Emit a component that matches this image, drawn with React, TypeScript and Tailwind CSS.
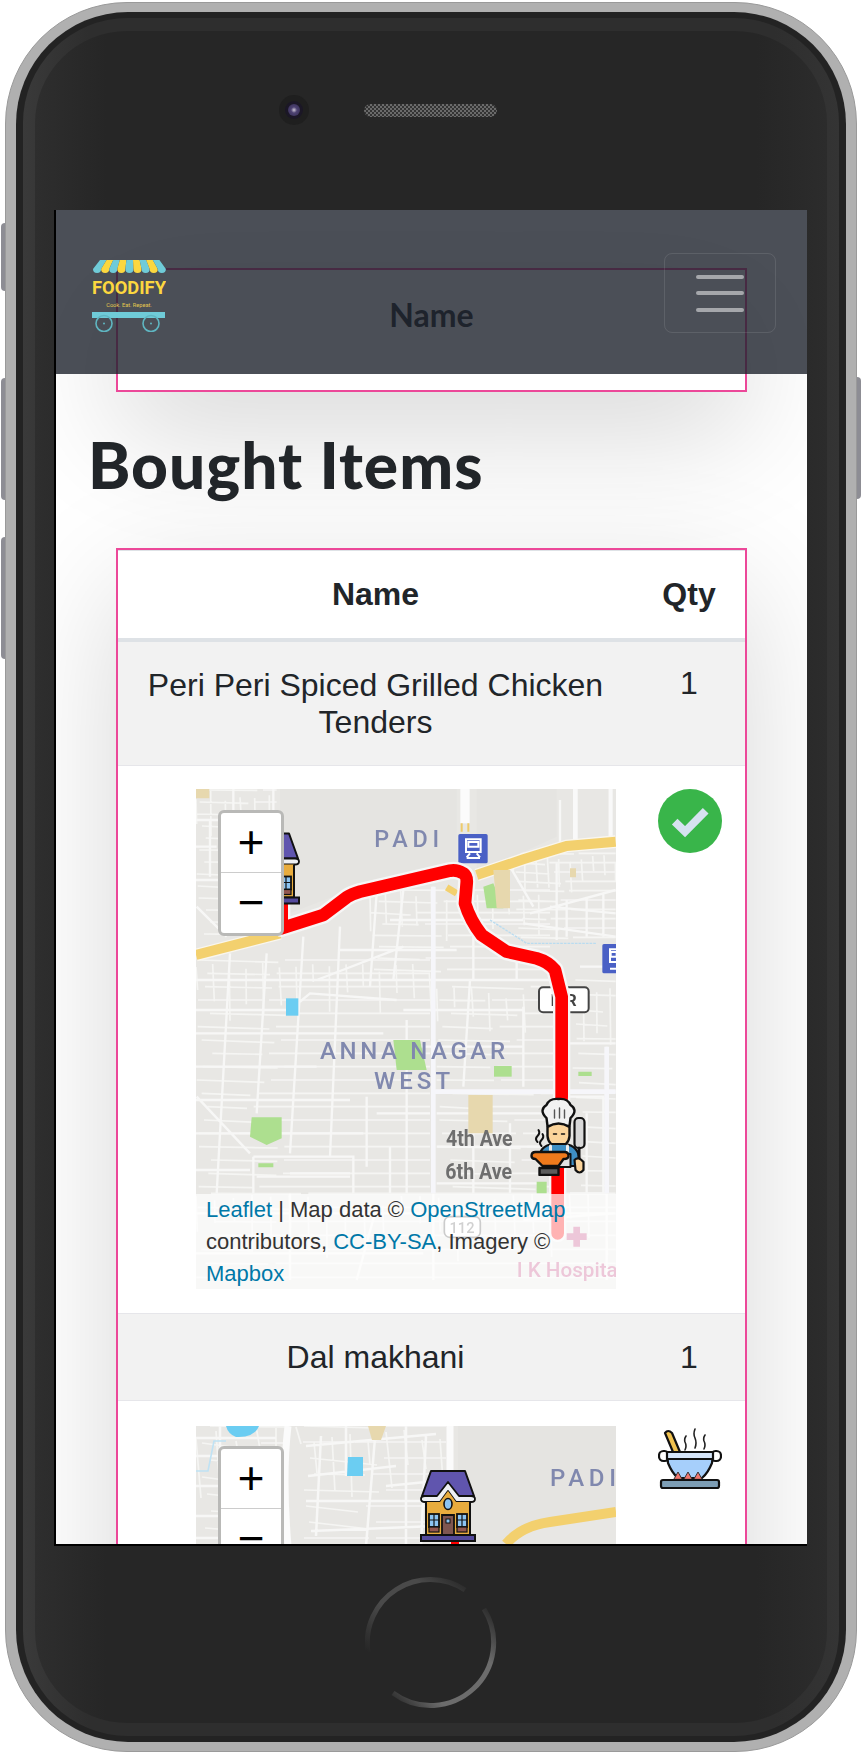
const LINK = 'text-[#0078a8]';

// minor streets of the first map, in zoom-crop coordinates
const streets1 = [
  'M18 120H250', 'M18 200H80', 'M18 300H270', 'M18 600H1080', 'M18 690H300L360 640L620 660',
  'M18 760H580', 'M18 860H380', 'M18 960H480', 'M18 1060H520', 'M190 1130H490V1240', 'M190 1130V1240',
  'M250 27V90', 'M130 27V100', 'M60 120V290', 'M20 380L110 470', 'M120 520L80 1240', 'M230 520L200 1000',
  'M340 470L300 1120', 'M450 440L420 1130', 'M560 340L540 620', 'M640 330L610 600',
  'M730 320V1500', 'M850 470V600', 'M980 500V600', 'M650 720V1240', 'M840 600L820 920', 'M1000 680V920',
  'M600 420H1000', 'M450 510H800', 'M380 600L640 500', 'M640 690H1000', 'M640 800H1000', 'M560 1000H720',
  'M730 935H1277', 'M1140 790H1277', 'M1250 800V1500', 'M1140 950H1240V1240', 'M1160 27V200', 'M1260 27V180',
  'M1110 60V190', 'M1020 400L1277 330', 'M1100 250V480', 'M1000 430L1277 470', 'M1080 380L1277 400',
  'M1130 360V470', 'M1190 350V470', 'M1240 340V470', 'M1170 560H1277', 'M960 260L1030 380',
  'M740 1000H1060', 'M740 1100H1060', 'M740 1210H1060', 'M850 1000V1240', 'M960 1030V1240',
  'M300 1180H480', 'M200 1190H480', 'M600 1100V1240', 'M530 950V1160', 'M18 1170H180', 'M20 950L180 1120',
  'M1190 1000V1240', 'M1140 1240H1250', 'M18 1300H1277', 'M18 1420H700', 'M300 1240V1500', 'M560 1280L500 1500',
  'M820 27V120', 'M1000 1320L1277 1300',
];

// fills a district with a rough mesh of small lanes
function lanes(x0: number, y0: number, x1: number, y1: number, dx: number, dy: number, seed: number) {
  let s = seed;
  const rnd = () => {
    s = (s * 9301 + 49297) % 233280;
    return s / 233280;
  };
  let d = '';
  for (let y = y0; y < y1; y += dy) {
    const a = x0 + rnd() * dx;
    const b = Math.min(x1, a + dx * (2 + rnd() * 3));
    d += `M${a.toFixed(0)} ${y.toFixed(0)}L${b.toFixed(0)} ${(y + rnd() * 8).toFixed(0)}`;
    if (b < x1 - dx) d += `M${(b + dx * 0.4).toFixed(0)} ${y.toFixed(0)}H${x1}`;
  }
  for (let x = x0; x < x1; x += dx) {
    const a = y0 + rnd() * dy;
    const b = Math.min(y1, a + dy * (1 + rnd() * 3));
    d += `M${x.toFixed(0)} ${a.toFixed(0)}L${(x + rnd() * 6).toFixed(0)} ${b.toFixed(0)}`;
  }
  return d;
}

const lanes1 = [
  lanes(18, 30, 260, 480, 44, 36, 7),
  lanes(18, 540, 720, 1240, 50, 40, 23),
  lanes(540, 330, 1080, 600, 46, 34, 41),
  lanes(970, 220, 1277, 480, 34, 28, 11),
  lanes(740, 620, 1090, 1240, 52, 40, 67),
  lanes(1140, 600, 1277, 1240, 40, 44, 5),
  lanes(18, 1240, 1277, 1527, 56, 42, 90),
].join('');

// same idea for the part of the second map that is on screen
const streets2 = [
  'M0 12H80', 'M0 30H60', 'M0 60H40', 'M0 90H60', 'M0 112H50', 'M24 0V120',
  'M110 20L240 8', 'M112 50L200 40', 'M110 75H230', 'M115 105L240 100',
  'M125 10L120 110', 'M150 0V50', 'M180 0L170 120', 'M210 0V120', 'M230 10L225 120', 'M190 60L240 55',
];
const lanes2 = lanes(100, 0, 250, 125, 18, 16, 31) + lanes(0, 0, 90, 125, 20, 17, 12);

const ROUTE =
  'M275 360V445L400 405L470 352Q485 342 510 335L780 272Q800 268 820 280Q832 288 830 310L825 370Q840 420 875 465L950 515L1040 535Q1075 545 1095 570L1115 650V950L1103 1170V1360';

function House({ className }: { className: string }) {
  return (
    <svg viewBox="0 0 56 72" className={className}>
      <path d="M6 30H50V65H6Z" fill="#e8ac3e" stroke="#111" strokeWidth="2" />
      <path d="M11 1H45L54 26H2Z" fill="#6055ae" stroke="#111" strokeWidth="2" strokeLinejoin="round" />
      <path d="M1 29Q1 26 5 26H17L28 12L39 26H51Q55 26 55 29Q55 32 51 32H36L28 21L20 32H5Q1 32 1 29Z" fill="#eef0f4" stroke="#111" strokeWidth="1.8" strokeLinejoin="round" />
      <path d="M20 32L28 21L36 32H50V45H6V32Z" fill="#e8ac3e" />
      <path d="M6 32V65M50 32V65" stroke="#111" strokeWidth="2" />
      <ellipse cx="28" cy="34" rx="4" ry="5.5" fill="#8cc4f2" stroke="#111" strokeWidth="1.6" />
      <path d="M22 45H34V65H22Z" fill="#7f5650" stroke="#111" strokeWidth="1.8" />
      <rect x="26" y="49" width="4" height="4" fill="#8cc4f2" stroke="#111" strokeWidth="1" />
      <rect x="9" y="44" width="10" height="13" fill="#8cc4f2" stroke="#111" strokeWidth="1.8" />
      <rect x="37" y="44" width="10" height="13" fill="#8cc4f2" stroke="#111" strokeWidth="1.8" />
      <path d="M14 44V57M9 50H19M42 44V57M37 50H47" stroke="#111" strokeWidth="1.2" />
      <rect x="9" y="57" width="10" height="5" fill="#93574f" stroke="#111" strokeWidth="1.2" />
      <rect x="37" y="57" width="10" height="5" fill="#93574f" stroke="#111" strokeWidth="1.2" />
      <rect x="1" y="65" width="54" height="6" fill="#544a9c" stroke="#111" strokeWidth="2" />
    </svg>
  );
}

function Chef({ className }: { className: string }) {
  return (
    <svg viewBox="0 0 56 80" className={className} strokeLinejoin="round" strokeLinecap="round">
      <path d="M16 22Q8 14 16 9Q19 2 28 3Q37 2 40 9Q48 14 40 22L39 30H17Z" fill="#f2f2f2" stroke="#111" strokeWidth="2.4" />
      <path d="M24 14V22M29 12V22M34 14V22" stroke="#555" strokeWidth="1.4" />
      <path d="M17 31Q28 24 39 31V40Q38 50 28 50Q18 50 17 40Z" fill="#fbd49b" stroke="#111" strokeWidth="2.4" />
      <path d="M23 38H26M31 38H34" stroke="#111" strokeWidth="1.5" />
      <path d="M9 62Q9 50 22 48H35Q48 50 49 64V70H14Z" fill="#3f8fc4" stroke="#111" strokeWidth="2.2" />
      <path d="M20 50V58M37 50V58" stroke="#eee" strokeWidth="3" />
      <path d="M18 58H40V71H18Z" fill="#e2e2e2" stroke="#111" strokeWidth="2" />
      <path d="M1 60Q1 56 5 56H34Q38 56 38 60Q38 63 33 63L28 70H12L5 63Q1 63 1 60Z" fill="#ef7a1c" stroke="#111" strokeWidth="2.4" />
      <path d="M9 72H28V79H9Z" fill="#5c5c5c" stroke="#111" strokeWidth="2.4" />
      <rect x="44" y="22" width="10" height="30" rx="4" fill="#d8d8d8" stroke="#111" strokeWidth="2.2" />
      <path d="M48.5 52V66" stroke="#111" strokeWidth="3" />
      <path d="M44 64Q48 60 53 66V74Q49 79 45 74Z" fill="#fbd49b" stroke="#111" strokeWidth="2.2" />
      <path d="M7 46Q4 43 7 40Q10 37 8 34M11 50Q8 47 11 44Q14 41 12 38" fill="none" stroke="#111" strokeWidth="2" />
    </svg>
  );
}

function Pot({ className }: { className: string }) {
  return (
    <svg viewBox="0 0 64 62" className={className} strokeLinecap="round" strokeLinejoin="round">
      <path d="M7 5Q10 1 14 5L22 24H15Z" fill="#f0c24f" stroke="#111" strokeWidth="2.2" />
      <path d="M28 8Q26 11 27 14Q29 18 27 22M37 1Q35 6 37 10Q39 15 37 20M47 7Q45 10 46 13Q48 17 46 21" fill="none" stroke="#222" strokeWidth="1.6" />
      <rect x="1" y="23" width="10" height="10" rx="4.5" fill="#fff" stroke="#111" strokeWidth="2.2" />
      <rect x="53" y="23" width="10" height="10" rx="4.5" fill="#fff" stroke="#111" strokeWidth="2.2" />
      <path d="M9 24H55L54 35Q50 45 44 50H20Q14 45 10 35Z" fill="#a6cffb" stroke="#111" strokeWidth="2.2" />
      <path d="M9 24H55V31H9Z" fill="#d6e6fa" stroke="#111" strokeWidth="2.2" />
      <path d="M26 31H30M33 31H34M37 31H50" stroke="#111" strokeWidth="1.4" />
      <path d="M16 51L20 44L24 51ZM26 51L30 44L34 51ZM36 51L40 44L44 51Z" fill="#f0756e" stroke="#333" strokeWidth="1" />
      <rect x="3" y="52" width="58" height="8" rx="2" fill="#7d9eb5" stroke="#111" strokeWidth="2.2" />
    </svg>
  );
}

function Logo() {
  const stripes = [0, 1, 2, 3, 4, 5, 6, 7, 8];
  return (
    <svg viewBox="0 0 74 72" className="w-[74px] h-[72px]">
      {stripes.map((i) => {
        const tl = 8 + i * 6.6;
        const bl = 1 + i * 8.1;
        return (
          <path
            key={i}
            d={`M${tl} 0H${tl + 6.6}L${bl + 8.1} 9A4.05 4.05 0 0 1 ${bl} 9Z`}
            fill={i % 2 ? '#fcd73f' : '#6fcbd8'}
          />
        );
      })}
      <text x="37" y="33.5" textAnchor="middle" fontFamily="Roboto, sans-serif" fontWeight="700" fontSize="19" fill="#fcd73f" textLength="74" lengthAdjust="spacingAndGlyphs">FOODIFY</text>
      <text x="37" y="46.5" textAnchor="middle" fontFamily="Roboto, sans-serif" fontSize="5.6" fill="#e5c94e">Cook. Eat. Repeat.</text>
      <rect x="0" y="52" width="73" height="6" fill="#6fcbd8" />
      <circle cx="12" cy="63.5" r="8" fill="none" stroke="#5fb6c2" strokeWidth="1.6" />
      <circle cx="59" cy="63.5" r="8" fill="none" stroke="#5fb6c2" strokeWidth="1.6" />
      <circle cx="12" cy="63.5" r="1" fill="#5fb6c2" />
      <circle cx="59" cy="63.5" r="1" fill="#5fb6c2" />
    </svg>
  );
}

function ZoomControl({ top }: { top: string }) {
  return (
    <div className={`absolute left-[22px] ${top} border-[3px] border-[#b9b9b7] rounded-[6px] w-[66px] bg-white font-['Liberation_Mono',monospace] text-black`}>
      <div className="h-[60px] flex items-center justify-center text-[46px] border-b border-[#ccc] pt-[8px]">+</div>
      <div className="h-[60px] flex items-center justify-center text-[46px] pt-[6px]">−</div>
    </div>
  );
}

function Map1() {
  return (
    <div className="relative w-[420px] h-[500px] overflow-hidden">
      <svg viewBox="18 27 1260 1500" className="w-full h-full block blur-[0.4px]">
        <rect x="18" y="27" width="1260" height="1500" fill="#e8e7e4" />
        <path d={lanes1} fill="none" stroke="#f5f5f3" strokeWidth="5" />
        <path d={streets1.join('')} fill="none" stroke="#f7f7f6" strokeWidth="7" />
        <path d="M270 27H800V250L480 330L300 400H270Z" fill="#e5e4e1" />
        <path d="M860 27H1100V170L880 270H860Z" fill="#e5e4e1" />
        <path d="M730 320V1240M1250 800V1240M730 935H1277" fill="none" stroke="#f6f6fa" strokeWidth="14" />
        <path d="M825 27V130" fill="none" stroke="#fbfbfb" strokeWidth="28" />
        <path d="M815 130V155M835 130V155" stroke="#eecb6a" strokeWidth="6" />
        <path d="M1155 27V180M1262 27V170" fill="none" stroke="#f9f9f9" strokeWidth="12" />
        <path d="M18 525L270 460" fill="none" stroke="#f9f6ee" strokeWidth="38" />
        <path d="M860 285L1000 238L1130 198L1277 185" fill="none" stroke="#f9f6ee" strokeWidth="38" />
        <path d="M18 525L270 460" fill="none" stroke="#f3d06e" strokeWidth="30" />
        <path d="M860 285L1000 238L1130 198L1277 185" fill="none" stroke="#f3d06e" strokeWidth="30" />
        <path d="M770 322L800 340" fill="none" stroke="#f3d06e" strokeWidth="20" />
        <path d="M288 655H325V707H288Z" fill="#6bcdf2" />
        <path d="M610 780H690L710 870H620Z" fill="#addf8f" />
        <path d="M912 858H965V890H912Z" fill="#addf8f" />
        <path d="M185 1012H275V1075L230 1095L180 1070Z" fill="#addf8f" />
        <path d="M880 320L910 310L940 385H890Z" fill="#addf8f" />
        <path d="M1165 875H1205V888H1165ZM205 1150H250V1162H205ZM1040 1205H1070V1240H1040Z" fill="#addf8f" />
        <path d="M910 270H960V385H920Z" fill="#e7d8ae" />
        <path d="M835 945H908V1060H835Z" fill="#e7d8ae" />
        <path d="M18 27H58V55H18ZM1140 265H1158V292H1140Z" fill="#e7d8ae" />
        <path d="M900 420L1010 490H1220" fill="none" stroke="#b9dcf0" strokeWidth="4" strokeDasharray="8 3" />
        <g fontFamily="Roboto, 'Noto Sans', sans-serif" fontWeight="500" fill="#8088ae">
          <text x="553" y="200" fontSize="70" textLength="194">PADI</text>
          <text x="390" y="838" fontSize="72" textLength="555">ANNA NAGAR</text>
          <text x="552" y="928" fontSize="72" textLength="228">WEST</text>
        </g>
        <g fontFamily="Roboto, 'Noto Sans', sans-serif" fontWeight="700" fill="#6e6e6e">
          <text x="768" y="1098" fontSize="64" textLength="200" lengthAdjust="spacingAndGlyphs">4th Ave</text>
          <text x="766" y="1196" fontSize="64" textLength="200" lengthAdjust="spacingAndGlyphs">6th Ave</text>
        </g>
        <rect x="805" y="162" width="88" height="88" rx="5" fill="#4a60c5" />
        <path d="M828 178H872V216H828ZM835 186H865V200H835ZM830 232L840 220M870 232L860 220M830 234H870" fill="none" stroke="#fff" strokeWidth="6" />
        <rect x="1237" y="492" width="88" height="88" rx="5" fill="#4a60c5" />
        <path d="M1260 508H1290V546H1260ZM1262 516H1280V530H1262ZM1260 566H1290" fill="none" stroke="#fff" strokeWidth="6" />
        <rect x="1047" y="622" width="149" height="75" rx="12" fill="#fff" stroke="#444" strokeWidth="6" />
        <text x="1121" y="678" textAnchor="middle" fontFamily="Roboto, sans-serif" fontWeight="700" fontSize="50" fill="#444">IRR</text>
        <path d={ROUTE} fill="none" stroke="#f6f6f6" strokeWidth="52" strokeLinejoin="round" strokeLinecap="round" />
        <path d={ROUTE} fill="none" stroke="#f00" strokeWidth="38" strokeLinejoin="round" strokeLinecap="round" />
        <rect x="763" y="1310" width="108" height="62" rx="16" fill="#fff" stroke="#555" strokeWidth="5" />
        <text x="816" y="1358" textAnchor="middle" fontFamily="Roboto, sans-serif" fontWeight="500" fontSize="44" fill="#666">112</text>
        <path d="M1150 1340H1170V1360H1190V1380H1170V1400H1150V1380H1130V1360H1150Z" fill="#c2457f" />
        <text x="980" y="1490" fontFamily="Roboto, sans-serif" fontWeight="500" fontSize="62" fill="#c2457f">I K Hospital</text>
      </svg>
      <House className="absolute left-[48px] top-[43px] w-[56px] h-[73px]" />
      <Chef className="absolute left-[334px] top-[307px] w-[57px] h-[80px]" />
      <ZoomControl top="top-[21px]" />
      <div className="absolute left-0 right-0 bottom-0 h-[95px] bg-white/70 px-[10px] text-left text-[22px] leading-[32px] text-[#333] font-['Liberation_Sans',sans-serif]">
        <span className={LINK}>Leaflet</span> | Map data © <span className={LINK}>OpenStreetMap</span> contributors, <span className={LINK}>CC-BY-SA</span>, Imagery © <span className={LINK}>Mapbox</span>
      </div>
    </div>
  );
}

function Map2() {
  return (
    <div className="relative w-[420px] h-[500px] overflow-hidden">
      <svg viewBox="0 0 420 500" className="w-full h-full block blur-[0.4px]">
        <rect width="420" height="500" fill="#e8e7e4" />
        <path d={lanes2} fill="none" stroke="#f5f5f3" strokeWidth="1.7" />
        <path d={streets2.join('')} fill="none" stroke="#f7f7f6" strokeWidth="2.5" />
        <path d="M262 0H420V85L340 95L300 125H262Z" fill="#e5e4e1" />
        <path d="M92 0Q86 50 92 120M254 0V60" fill="none" stroke="#fbfbfb" strokeWidth="7" />
        <path d="M30 0H63Q58 12 40 11Q32 8 30 0Z" fill="#6bcdf2" />
        <path d="M0 45H12L18 15H30" fill="none" stroke="#bfe2f4" strokeWidth="1.6" />
        <path d="M152 31H167V50H151Z" fill="#6bcdf2" />
        <path d="M172 0H190L185 14H176Z" fill="#e7d8ae" />
        <path d="M310 118Q325 100 354 96L420 86" fill="none" stroke="#f3d06e" strokeWidth="10" />
        <text x="354" y="60" fontFamily="Roboto, sans-serif" fontWeight="500" fontSize="24" textLength="66" fill="#8088ae">PADI</text>
      </svg>
      <div className="absolute left-[255px] top-[114px] w-[8px] h-[16px] bg-[#f00]" />
      <House className="absolute left-[224px] top-[44px] w-[56px] h-[72px]" />
      <ZoomControl top="top-[20px]" />
    </div>
  );
}

function HomeRing() {
  return (
    <svg viewBox="0 0 132 132" className="w-[132px] h-[132px]">
      <defs>
        <linearGradient id="ringA" x1="0" y1="1" x2="1" y2="0">
          <stop offset="0" stopColor="#4a4a4a" stopOpacity="0" />
          <stop offset="0.4" stopColor="#4a4a4a" />
          <stop offset="0.75" stopColor="#4a4a4a" />
          <stop offset="1" stopColor="#4a4a4a" stopOpacity="0" />
        </linearGradient>
        <linearGradient id="ringB" x1="1" y1="0" x2="0" y2="1">
          <stop offset="0" stopColor="#6c6c6c" stopOpacity="0" />
          <stop offset="0.3" stopColor="#6c6c6c" />
          <stop offset="0.75" stopColor="#6c6c6c" />
          <stop offset="1" stopColor="#6c6c6c" stopOpacity="0" />
        </linearGradient>
      </defs>
      <path d="M3 75A63 63 0 0 1 100 13" fill="none" stroke="url(#ringA)" strokeWidth="5" />
      <path d="M119 32A63 63 0 0 1 28 116" fill="none" stroke="url(#ringB)" strokeWidth="5" />
    </svg>
  );
}

function SideButton({ className }: { className: string }) {
  return <div className={`absolute w-[8px] bg-[#8d8d94] ${className}`} />;
}

export default function App() {
  return (
    <div className="relative w-[862px] h-[1754px] bg-white overflow-hidden">
      <SideButton className="left-[1px] top-[223px] h-[68px] rounded-l-[4px]" />
      <SideButton className="left-[1px] top-[378px] h-[122px] rounded-l-[4px]" />
      <SideButton className="left-[1px] top-[537px] h-[122px] rounded-l-[4px]" />
      <SideButton className="right-[1px] top-[377px] h-[122px] rounded-r-[4px]" />

      {/* phone shell */}
      <div className="absolute left-[5px] top-[2px] w-[852px] h-[1750px] rounded-[122px] bg-[#b0b0b0] border border-[#9a9a9a] px-[10px] py-[9px]">
        <div className="h-full rounded-[112px] bg-[#232323] px-[7px] py-[6px]">
          <div className="h-full rounded-[105px] bg-[linear-gradient(90deg,#3a3a3a,#2e2e2e_8%,#2e2e2e_92%,#343434)] px-[12px] py-[13px]">
            <div className="h-full rounded-[92px] bg-[linear-gradient(90deg,#2e2e2e,#262626_9%,#262626_91%,#2c2c2c)] flex flex-col">
              <div className="flex items-center pl-[244px] pt-[64px]">
                <div className="w-[30px] h-[30px] rounded-full bg-[#1f1f1f] flex items-center justify-center">
                  <div className="w-[18px] h-[18px] rounded-full bg-[#1b1726] flex items-center justify-center">
                    <div className="w-[12px] h-[12px] rounded-full bg-[radial-gradient(circle,#cfc8d8_0,#4d4272_35%,#322a50)]" />
                  </div>
                </div>
                <div className="ml-[55px] w-[133px] h-[13px] rounded-full bg-[repeating-conic-gradient(#6a6a6a_0_25%,#333_0_50%)] bg-[length:4px_4px]" />
              </div>

              {/* screen */}
              <div className="relative mt-[85px] ml-[19px] mr-[20px] h-[1336px] border-l-2 border-b-2 border-black bg-white overflow-hidden font-['Liberation_Sans',sans-serif] text-[#212529]">
                <div className="px-[60px] pt-[58px]">
                  <div className="h-[124px] border-2 border-[#ec4899] bg-white shadow-[0_40px_120px_rgba(0,0,0,0.16)] flex items-center justify-center">
                    <span className="font-['Lato',sans-serif] font-bold text-[32px] mb-[30px]">Name</span>
                  </div>
                  <h1 className="-ml-[28px] mt-[37px] font-['Lato',sans-serif] font-black text-[64px] tracking-[1px] leading-[72px]">Bought Items</h1>
                  <div className="mt-[47px] border-2 border-b-0 border-[#ec4899] bg-white shadow-[0_40px_120px_rgba(0,0,0,0.16)]">
                    <div className="grid grid-cols-[515px_1fr] text-center text-[32px] leading-[37px]">
                      <div className="h-[92px] border-t border-b-[4px] border-[#dee2e6] font-bold flex items-center justify-center">Name</div>
                      <div className="h-[92px] border-t border-b-[4px] border-[#dee2e6] font-bold flex items-center justify-center">Qty</div>

                      <div className="h-[124px] bg-[#f2f2f2] border-b border-[#e6e6ea] flex items-center justify-center px-[16px]">Peri Peri Spiced Grilled Chicken Tenders</div>
                      <div className="h-[124px] bg-[#f2f2f2] border-b border-[#e6e6ea] flex justify-center pt-[23px]">1</div>

                      <div className="h-[548px] border-b border-[#e6e6ea] pt-[23px] pl-[78px]"><Map1 /></div>
                      <div className="h-[548px] border-b border-[#e6e6ea] pt-[23px] pl-[25px]">
                        <svg viewBox="0 0 64 64" className="w-[64px] h-[64px]">
                          <circle cx="32" cy="32" r="32" fill="#39b54a" />
                          <path d="M16.7 32.7L27 42.7L47.7 21.7" fill="none" stroke="#d6e2f0" strokeWidth="8" />
                        </svg>
                      </div>

                      <div className="h-[87px] bg-[#f2f2f2] border-b border-[#e6e6ea] flex items-center justify-center">Dal makhani</div>
                      <div className="h-[87px] bg-[#f2f2f2] border-b border-[#e6e6ea] flex items-center justify-center">1</div>

                      <div className="pt-[25px] pl-[78px]"><Map2 /></div>
                      <div className="pt-[27px] pl-[25px]"><Pot className="w-[64px] h-[62px]" /></div>
                    </div>
                  </div>
                </div>

                {/* navbar over the page */}
                <div className="absolute left-0 right-0 top-0 h-[164px] bg-[#1e232d]/80 flex items-start justify-between pl-[36px] pr-[31px] pt-[50px]">
                  <Logo />
                  <div className="mt-[-7px] w-[112px] h-[80px] rounded-[8px] border border-white/10 flex flex-col items-center justify-center gap-[12.5px]">
                    <div className="w-[48px] h-[4px] bg-white/50 rounded-full" />
                    <div className="w-[48px] h-[4px] bg-white/50 rounded-full" />
                    <div className="w-[48px] h-[4px] bg-white/50 rounded-full" />
                  </div>
                </div>
              </div>

              <div className="mt-[31px] flex justify-center"><HomeRing /></div>
            </div>
          </div>
        </div>
      </div>
    </div>
  );
}
